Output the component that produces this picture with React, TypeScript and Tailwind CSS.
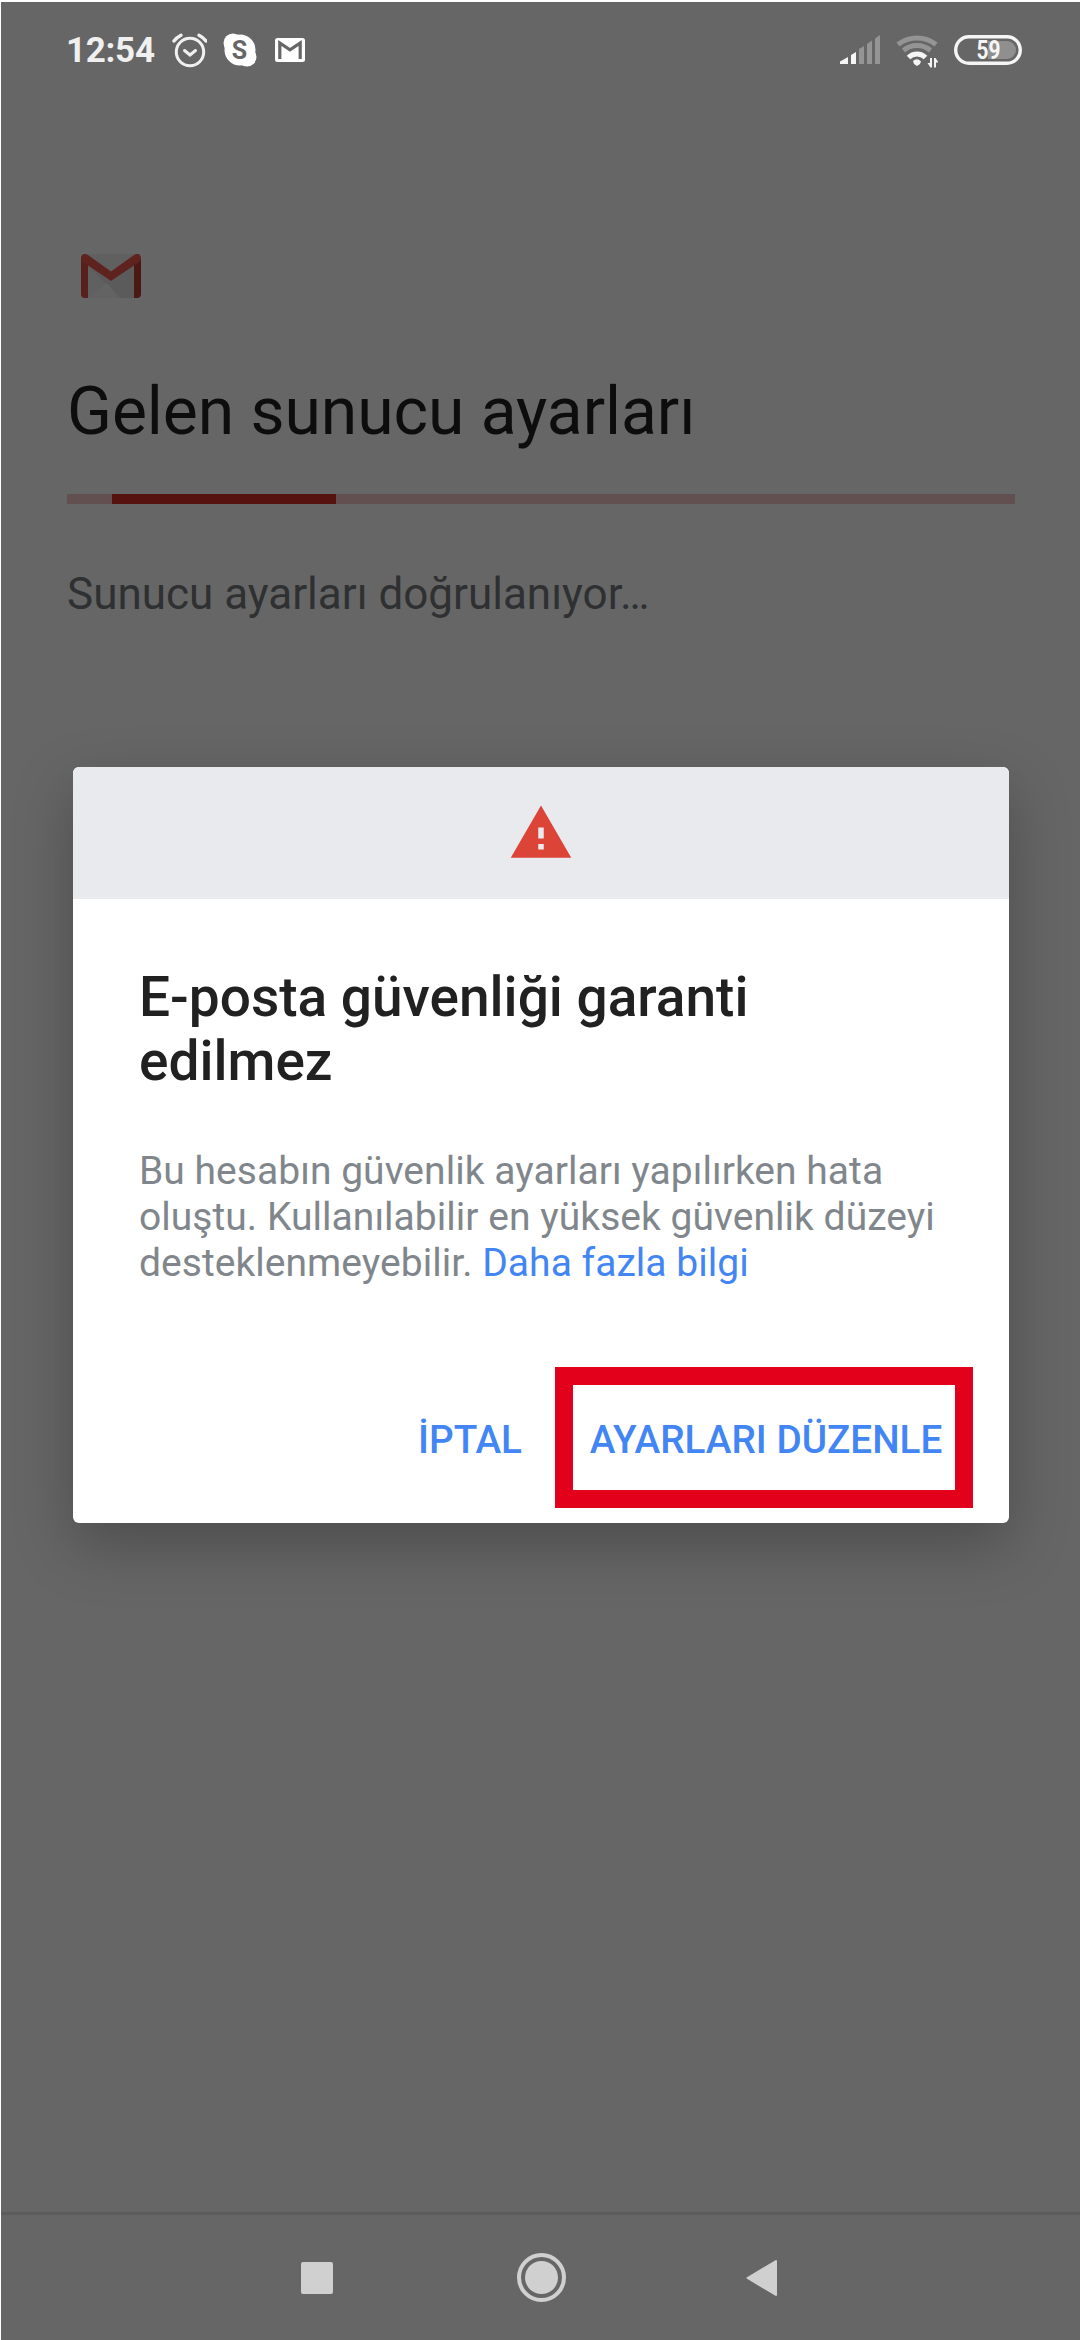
import React from 'react';

function StatusBar() {
  return (
    <div className="flex h-[98px] items-center pb-[2px] pl-[65px] pr-[58px]">
      <span className="w-[105px] text-[35px] leading-none font-bold tracking-[-0.3px] text-[#f0f0f0]">12:54</span>

      {/* Alarm */}
      <svg className="h-[36px] w-[36px]" viewBox="0 0 36 36" fill="none" stroke="#f0f0f0">
        <circle cx="19" cy="20" r="13.7" strokeWidth="3" />
        <path d="M13.5 18.5l5.5 4.5 5.5-4.5" strokeWidth="3" strokeLinecap="round" />
        <path d="M3 9Q5.5 5.500 10 3.2M35 9Q32.5 5.500 28 3.2" strokeWidth="3.4" strokeLinecap="round" />
      </svg>

      {/* Skype */}
      <svg className="ml-[16px] h-[34px] w-[34px]" viewBox="0 0 34 34" fill="#fff">
        <circle cx="17" cy="17" r="15.5" />
        <circle cx="10" cy="10" r="9.5" />
        <circle cx="24" cy="24" r="9.5" />
        <text x="16.500" y="26" textAnchor="middle" className="fill-[#666666] text-[25px] font-bold">
          S
        </text>
      </svg>

      {/* Gmail */}
      <svg className="ml-[18px] h-[24px] w-[30px]" viewBox="0 0 30 24" fill="none">
        <rect width="30" height="24" rx="2.500" fill="#fff" />
        <path d="M4.8 21V5L15 11.800 25.2 5V21" stroke="#666" strokeWidth="3.2" />
      </svg>

      <div className="ml-auto flex items-center">
        {/* Mobile signal */}
        <svg className="h-[30px] w-[40px]" viewBox="0 0 40 30">
          <path d="M0 29v-2.5L8 22v7zM11 29V20l5-3v12z" fill="#f5f5f5" />
          <path d="M19 29V14l5-3v18zM27 29V9l5-3.500v23.500zM35 29V3.500L40 0v29z" fill="#949494" />
        </svg>

        {/* Wi-Fi */}
        <svg className="ml-[16px] h-[36px] w-[42px]" viewBox="0 0 42 36" fill="none">
          <path d="M2 12.500A31 31 0 0 1 40 12.500" stroke="#949494" strokeWidth="5" />
          <path d="M7.500 18.500A21 21 0 0 1 34.500 18.500" stroke="#949494" strokeWidth="5" />
          <path d="M12.500 25.500A12 12 0 0 1 29.500 25.500" stroke="#f5f5f5" strokeWidth="5" />
          <path d="M17 29Q21 25.500 25 29.500L24 32l-3 2-3-2z" fill="#f5f5f5" />
          <path d="M34 26h2v9.500h-1.500l-3-4.500H34zM38 35.500V26h1.500l3 4.500H40v5z" fill="#f5f5f5" />
        </svg>

        {/* Battery */}
        <svg className="ml-[16px] h-[30px] w-[68px]" viewBox="0 0 68 30">
          <rect x="1.700" y="1.700" width="64.600" height="26.600" rx="13.300" fill="none" stroke="#f5f5f5" strokeWidth="3.400" />
          <path d="M34 6h19a9 9 0 0 1 0 18H34z" fill="#8f8f8f" />
          <text
            x="22.500"
            y="23.700"
            textLength="24"
            lengthAdjust="spacingAndGlyphs"
            className="fill-[#f5f5f5] text-[25px] font-bold"
          >
            59
          </text>
        </svg>
      </div>
    </div>
  );
}

function GmailLogo() {
  return (
    <svg className="ml-[14px] h-[44px] w-[60px]" viewBox="0 0 60 44">
      <rect x="2" width="56" height="44" rx="2" fill="#606060" />
      <path d="M7 12L40 44h13V12L30 28z" fill="#5b5b5b" />
      <path d="M7 44l19-15 12 15z" fill="#636363" />
      <path d="M0 4l7 5v35H4a4 4 0 0 1-4-4z" fill="#58201c" />
      <path d="M60 4l-7 5v35h3a4 4 0 0 0 4-4z" fill="#4c1813" />
      <path d="M0 4C0 0 4-1 7 1L30 17.500 53 1c3-2 7-1 7 3 0 2-1 3.500-2.500 4.500L30 27 2.500 8.500C1 7.500 0 6 0 4z" fill="#5f231f" />
    </svg>
  );
}

function SecurityDialog() {
  return (
    <div className="absolute top-[765px] left-[72px] flex h-[756px] w-[936px] flex-col rounded-[6px] bg-white shadow-[0_22px_60px_rgba(0,0,0,0.25)]">
      <div className="flex h-[132px] items-center justify-center rounded-t-[6px] bg-[#e8eaed]">
        <svg className="h-[66px] w-[66px]" viewBox="0 0 24 24" fill="#db4437">
          <path d="M1 21h22L12 2 1 21zm12-3h-2v-2h2v2zm0-4h-2v-4h2v4z" />
        </svg>
      </div>

      <div className="px-[66px] pt-[66px]">
        <h2 className="w-[700px] text-[55px] leading-[64px] font-medium text-[#212121]">
          E-posta güvenliği garanti edilmez
        </h2>
        <p className="mt-[55px] text-[39px] leading-[46px] tracking-[0.04px] whitespace-nowrap text-[#80868b]">
          Bu hesabın güvenlik ayarları yapılırken hata
          <br />
          oluştu. Kullanılabilir en yüksek güvenlik düzeyi
          <br />
          desteklenmeyebilir. <a className="text-[#4285f4]">Daha fazla bilgi</a>
        </p>
      </div>

      <div className="mt-auto mr-[36px] mb-[15px] flex items-center justify-end gap-[33px] text-[38.7px] font-medium text-[#4285f4]">
        <button className="pt-[5px]">İPTAL</button>
        <button className="h-[141px] w-[418px] border-[18px] border-[#e2001a] pt-[5px] pl-[4px] whitespace-nowrap">
          AYARLARI DÜZENLE
        </button>
      </div>
    </div>
  );
}

function NavBar() {
  return (
    <div className="mt-auto flex h-[128px] items-center border-t-[3px] border-[#5c5c5c] pl-[300px]">
      <div className="h-[32px] w-[32px] rounded-[2px] bg-[#d0d0d0]" />
      <svg className="ml-[184px] h-[49px] w-[49px]" viewBox="0 0 49 49">
        <circle cx="24.500" cy="24.500" r="22.500" fill="none" stroke="#d0d0d0" strokeWidth="4" />
        <circle cx="24.500" cy="24.500" r="16.500" fill="#d0d0d0" />
      </svg>
      <svg className="ml-[180px] h-[38px] w-[32px]" viewBox="0 0 32 38">
        <path d="M1.500 19L30 2v34z" fill="#d0d0d0" stroke="#d0d0d0" strokeWidth="2" strokeLinejoin="round" />
      </svg>
    </div>
  );
}

export default function App() {
  return (
    <div className="relative flex h-[2340px] w-[1080px] flex-col overflow-hidden border-t-2 border-l border-white bg-[#666666] font-[Roboto,sans-serif]">
      <StatusBar />

      <div className="px-[66px] pt-[154px]">
        <GmailLogo />
        <h1 className="mt-[75px] text-[66px] leading-[78px] tracking-[-0.05px] text-[#0d0d0d]">Gelen sunucu ayarları</h1>
        <div className="mt-[43px] h-[10px] w-[948px] bg-[#61504f] pl-[45px]">
          <div className="h-full w-[224px] bg-[#56120f]" />
        </div>
        <p className="mt-[64px] text-[44px] leading-[52px] text-[#2f3031]">Sunucu ayarları doğrulanıyor…</p>
      </div>

      <NavBar />
      <SecurityDialog />
    </div>
  );
}
